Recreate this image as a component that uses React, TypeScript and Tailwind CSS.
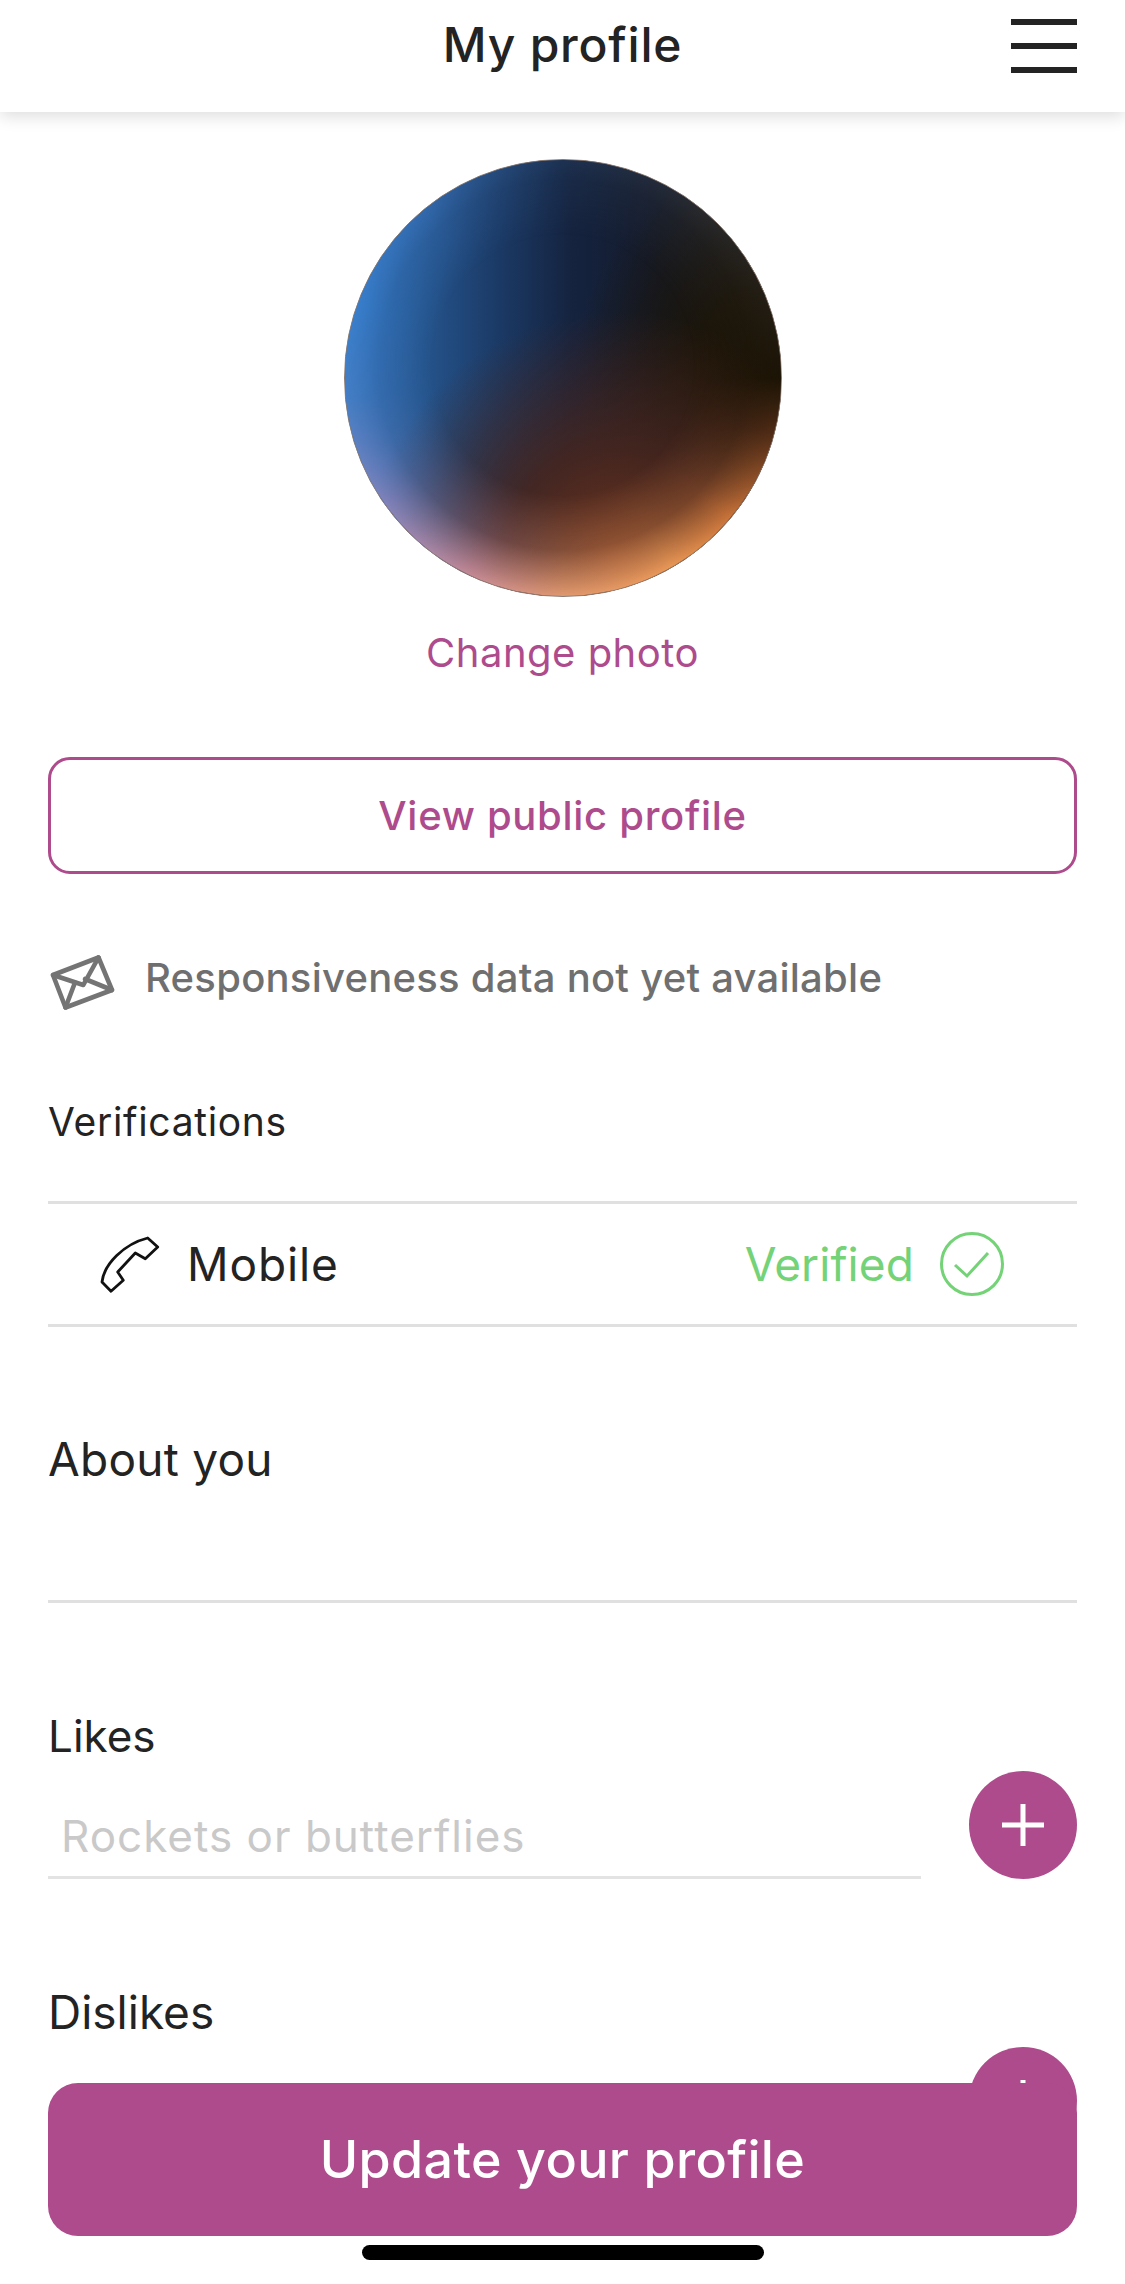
// My profile screen
function Envelope() {
  return (
    <svg className="w-[70px] h-[65px] shrink-0" viewBox="0 0 70 65" fill="none" stroke="#747474" strokeWidth="4.6" strokeLinejoin="round" strokeLinecap="round">
      <path d="M5 25 L50.5 7.5 L64 40 L17.5 57.5 Z" />
      <path d="M5 25 L35.3 35 L50.5 7.5" />
      <path d="M37 29 L64 40" />
      <path d="M27 32.5 L17.5 57.5" />
    </svg>
  );
}

function Phone() {
  return (
    <svg className="w-[60px] h-[58px] shrink-0" viewBox="14 13 60 58" fill="none" stroke="#111" strokeWidth="2.8" strokeLinejoin="round">
      <path d="M61.7 16 L71.7 25 L59.3 36.7 L49.3 31 L31.7 50 L37.3 58.3 L25 69.3 L16 60 C18 42 38 22 61.7 16 Z" />
    </svg>
  );
}

function VerifiedCheck() {
  return (
    <svg className="w-[64px] h-[64px] shrink-0" viewBox="0 0 64 64" fill="none" stroke="#74d277" strokeWidth="3">
      <circle cx="32" cy="32" r="30.5" />
      <path d="M15 33 L27 44 L48 21" />
    </svg>
  );
}

function AddRow({ placeholder }: { placeholder?: string }) {
  return (
    <div className="flex items-end justify-between">
      <div className="w-[873px] h-[71px] border-b-[3px] border-[#e3e3e3] pl-[13px] text-[#c9c9c9] text-[44px] tracking-[1px] leading-[56px]">
        {placeholder}
      </div>
      <button className="w-[108px] h-[108px] rounded-full bg-[#ae4b8c] flex items-center justify-center">
        <svg className="w-[42px] h-[42px]" viewBox="0 0 42 42" stroke="#fff" strokeWidth="5">
          <path d="M21 0 V42 M0 21 H42" />
        </svg>
      </button>
    </div>
  );
}

export default function App() {
  return (
    <div className="relative w-[1125px] h-[2284px] overflow-hidden bg-white text-[#232323] font-['Inter','Noto_Sans',sans-serif]">
      <header className="relative h-[112px] flex items-center justify-center pb-[22px] bg-white shadow-[0_4px_16px_rgba(0,0,0,0.14)]">
        <h1 className="text-[48px] tracking-[0.8px] leading-[60px] font-medium">My profile</h1>
        <div className="absolute right-[48px] top-[19px] w-[66px] flex flex-col gap-[18px]">
          <div className="h-[6px] bg-[#232323]" />
          <div className="h-[6px] bg-[#232323]" />
          <div className="h-[6px] bg-[#232323]" />
        </div>
      </header>

      <main className="flex flex-col px-[48px]">
        {/* avatar: dark core with a coloured rim on top */}
        <div className="relative overflow-hidden self-center mt-[47px] w-[438px] h-[438px] rounded-full border border-[#8a7a70] bg-[radial-gradient(circle_250px_at_62%_92%,rgba(110,52,30,1)_0px,rgba(72,38,30,0.9)_110px,transparent_250px),radial-gradient(circle_230px_at_105%_50%,#1c1405_0px,rgba(28,20,5,0.9)_100px,transparent_230px),linear-gradient(90deg,#2f6cb4_0%,#25548c_18%,#1b3a66_35%,#15233f_52%,#141a2a_72%,#1a1a1e_100%)]">
          <div className="absolute inset-0 bg-[conic-gradient(#223a5c_0deg,#333335_40deg,#1c1405_90deg,#5a3018_105deg,#d87c3c_130deg,#ef9c58_150deg,#e39a70_180deg,#c98c98_205deg,#8a86bd_235deg,#4a82c8_265deg,#3c86d6_290deg,#3a76c0_320deg,#223a5c_360deg)] [mask-image:radial-gradient(circle_235px_at_50%_47%,transparent_130px,rgba(0,0,0,0.3)_185px,black_232px)]" />
        </div>
        <p className="mt-[31px] text-center text-[#ae4b8c] text-[40px] tracking-[0.5px] leading-[50px]">Change photo</p>

        <button className="mt-[79px] h-[117px] rounded-[22px] border-[3px] border-[#ae4b8c] text-[#ae4b8c] text-[40px] tracking-[0.7px] font-medium">
          View public profile
        </button>

        <div className="mt-[76px] flex items-center h-[65px] text-[#6f6f6f] text-[40px] tracking-[0.25px] font-medium">
          <Envelope />
          <span className="ml-[27px] -mt-[10px]">Responsiveness data not yet available</span>
        </div>

        <h2 className="mt-[82px] text-[39px] tracking-[0.67px] leading-[50px]">Verifications</h2>

        <div className="mt-[54px] h-[126px] border-y-[3px] border-[#e0e0e0] flex items-center justify-between pl-[52px] pr-[73px]">
          <div className="flex items-center">
            <Phone />
            <span className="ml-[27px] text-[46px] tracking-[0.9px]">Mobile</span>
          </div>
          <div className="flex items-center">
            <span className="text-[#74d277] text-[46px] tracking-[0.1px]">Verified</span>
            <span className="ml-[26px] flex"><VerifiedCheck /></span>
          </div>
        </div>

        <h2 className="mt-[102px] text-[46px] tracking-[0.25px] leading-[60px]">About you</h2>
        <div className="mt-[111px] h-[3px] bg-[#e0e0e0]" />

        <h2 className="mt-[103px] text-[44px] leading-[60px]">Likes</h2>
        <div className="mt-[5px]">
          <AddRow placeholder="Rockets or butterflies" />
        </div>

        <h2 className="mt-[103px] text-[46px] leading-[60px]">Dislikes</h2>
        <div className="mt-[5px]">
          <AddRow />
        </div>
      </main>

      <button className="absolute left-[48px] top-[2083px] w-[1029px] h-[153px] rounded-[30px] bg-[#ae4b8c] text-white text-[52px] tracking-[0.35px] font-medium">
        Update your profile
      </button>
      <div className="absolute left-[362px] top-[2245px] w-[402px] h-[15px] rounded-full bg-black" />
    </div>
  );
}
